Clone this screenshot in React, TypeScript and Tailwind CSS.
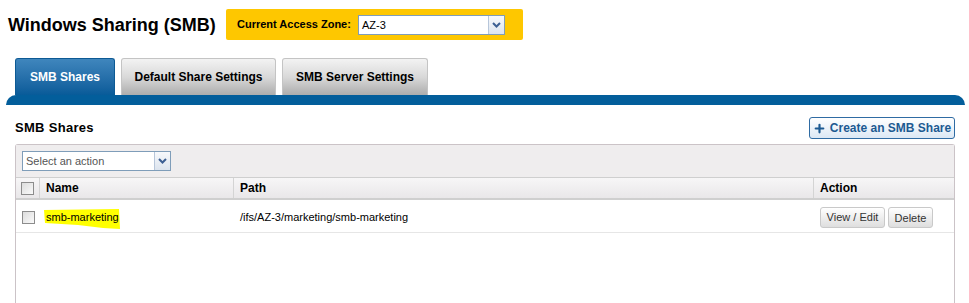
import { Plus } from "lucide-react";

function Chevron() {
  return (
    <svg width="9" height="6" viewBox="0 0 9 6" className="text-[#3c5f93]">
      <path d="M1 1l3.5 3.5L8 1" fill="none" stroke="currentColor" strokeWidth="2" />
    </svg>
  );
}

function DropButton() {
  return (
    <span className="flex w-[16px] items-center justify-center self-stretch border-l border-[#b7c6da] bg-gradient-to-b from-[#f7f9fc] to-[#dce4ee]">
      <Chevron />
    </span>
  );
}

function Checkbox() {
  return (
    <span className="block h-[13px] w-[13px] border border-[#8c8c8c] bg-gradient-to-br from-[#dcdcdc] to-[#fafafa]" />
  );
}

function Tab({ label, active }: { label: string; active?: boolean }) {
  return (
    <div
      className={
        active
          ? "flex h-[37px] w-[100px] items-center justify-center rounded-t-[3px] border border-b-0 border-[#0d5a94] bg-gradient-to-b from-[#3f86bd] to-[#075b99] text-white"
          : "flex h-[37px] items-center justify-center rounded-t-[3px] border border-b-0 border-[#c4c4c4] bg-gradient-to-b from-[#f3f3f3] via-[#d9d9d9] to-[#adadad] text-black"
      }
    >
      <span className="text-[12px] font-bold">{label}</span>
    </div>
  );
}

export default function App() {
  return (
    <div className="relative h-[303px] w-[969px] overflow-hidden bg-white font-['Liberation_Sans',Arial,sans-serif] text-black">
      {/* header */}
      <div className="flex items-center pl-[8px] pt-[9px]">
        <h1 className="w-[218px] text-[18px] font-bold leading-none">Windows Sharing (SMB)</h1>
        <div className="flex h-[31px] w-[297px] items-center rounded-[2px] bg-[#fec700] pl-[11px]">
          <span className="w-[121px] text-[11px] font-bold">Current Access Zone:</span>
          <div className="flex h-[20px] w-[147px] items-stretch border border-[#7f9db9] bg-white">
            <span className="flex-1 pl-[3px] text-[11px] leading-[18px]">AZ-3</span>
            <DropButton />
          </div>
        </div>
      </div>

      {/* tabs */}
      <div className="mt-[18px] flex gap-[6px] pl-[15px]">
        <Tab label="SMB Shares" active />
        <div className="w-[155px]">
          <Tab label="Default Share Settings" />
        </div>
        <div className="w-[146px]">
          <Tab label="SMB Server Settings" />
        </div>
      </div>
      <div className="ml-[6px] mr-[4px] h-[10px] rounded-t-[10px] bg-[#035e9b]" />

      {/* section header */}
      <div className="flex items-center justify-between pl-[15px] pr-[14px] pt-[12px]">
        <h2 className="text-[13px] font-bold tracking-[0.3px]">SMB Shares</h2>
        <button
          type="button"
          className="flex h-[22px] w-[146px] items-center justify-center gap-[4px] rounded-[3px] border border-[#2f6ba3] bg-gradient-to-b from-white to-[#dce8f5] text-[12px] font-bold text-[#1d5a92]"
        >
          <Plus className="h-[13px] w-[13px]" strokeWidth={4} />
          Create an SMB Share
        </button>
      </div>

      {/* panel */}
      <div className="ml-[15px] mt-[5px] h-[200px] w-[940px] rounded-t-[3px] border border-b-0 border-[#cbc3c7]">
        <div className="flex h-[32px] items-center bg-[#efedee] pl-[6px]">
          <div className="flex h-[20px] w-[149px] items-stretch border border-[#7f9db9] bg-white">
            <span className="flex-1 pl-[3px] text-[11px] leading-[18px] text-[#555]">Select an action</span>
            <DropButton />
          </div>
        </div>
        <div className="flex h-[23px] border-y border-b-2 border-[#cfcfcf] bg-gradient-to-b from-[#f7f6f7] to-[#e9e7e9] text-[12px] font-bold">
          <div className="flex w-[24px] items-center justify-center border-r border-[#d4d4d4]">
            <Checkbox />
          </div>
          <div className="flex w-[194px] items-center border-r border-[#d4d4d4] pl-[6px]">Name</div>
          <div className="flex w-[580px] items-center border-r border-[#d4d4d4] pl-[6px]">Path</div>
          <div className="flex flex-1 items-center pl-[6px]">Action</div>
        </div>
        <div className="flex h-[33px] items-center border-b border-[#e6e6e6] pt-[2px] text-[11px]">
          <div className="flex w-[24px] items-center justify-center">
            <Checkbox />
          </div>
          <div className="relative flex w-[194px] items-center pl-[6px]">
            <svg className="absolute left-[3px] top-[0px]" width="78" height="21" viewBox="0 0 78 21">
              <path d="M1 1 L76 0 L77 20 L60 19 L35 16 L2 14 Z" fill="#ffff00" />
            </svg>
            <span className="relative">smb-marketing</span>
          </div>
          <div className="flex w-[580px] items-center pl-[6px]">/ifs/AZ-3/marketing/smb-marketing</div>
          <div className="flex flex-1 items-center gap-[3px] pl-[6px] text-[#333]">
            <button type="button" className="h-[21px] w-[65px] rounded-[3px] border border-[#c9c9c9] bg-gradient-to-b from-white to-[#dedede]">
              View / Edit
            </button>
            <button type="button" className="h-[21px] w-[45px] rounded-[3px] border border-[#c9c9c9] bg-gradient-to-b from-white to-[#dedede] pt-[2px]">
              Delete
            </button>
          </div>
        </div>
      </div>
    </div>
  );
}
